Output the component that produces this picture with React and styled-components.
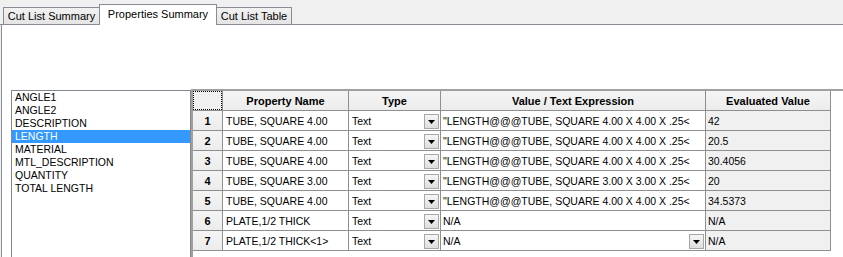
import React from 'react';
import styled, { createGlobalStyle } from 'styled-components';

const Global = createGlobalStyle`
  html, body { margin: 0; padding: 0; background: #ffffff; }
  body { font-family: "Liberation Sans", Arial, sans-serif; font-size: 10px; color: #000; }
  #root { width: 843px; height: 257px; overflow: hidden; }
`;

const Window = styled.div`
  width: 843px;
  height: 257px;
  display: flex;
  flex-direction: column;
  overflow: hidden;
  background: #f0f0f0;
`;

const TabStrip = styled.div`
  height: 25px;
  box-sizing: border-box;
  border-bottom: 1px solid #898c95;
  display: flex;
  align-items: flex-end;
  padding-left: 3px;
  flex-shrink: 0;
`;

const Tab = styled.div`
  box-sizing: border-box;
  width: ${p => p.$w}px;
  height: ${p => (p.$active ? 21 : 17)}px;
  margin-bottom: ${p => (p.$active ? -1 : 0)}px;
  padding-top: ${p => (p.$active ? 2 : 1)}px;
  border: 1px solid #898c95;
  border-bottom: ${p => (p.$active ? 'none' : '0')};
  background: ${p => (p.$active ? '#ffffff' : 'linear-gradient(#f2f2f2, #e4e4e4)')};
  font-size: 11px;
  line-height: 15px;
  text-align: center;
  white-space: nowrap;
  position: relative;
  z-index: ${p => (p.$active ? 2 : 1)};
  margin-left: ${p => p.$ml || 0}px;
`;

const Panel = styled.div`
  flex: 1;
  min-height: 0;
  display: flex;
  align-items: flex-start;
  margin-left: 1px;
  border-left: 1px solid #898c95;
  background: #ffffff;
  padding: 64px 0 0 9px;
`;

const ListBox = styled.div`
  box-sizing: border-box;
  width: 180px;
  height: 200px;
  margin-top: 1px;
  border: 1px solid #828790;
  background: #ffffff;
  flex-shrink: 0;
`;

const ListItem = styled.div`
  height: 13px;
  line-height: 13px;
  padding-left: 3px;
  font-size: 10.5px;
  white-space: nowrap;
  background: ${p => (p.$selected ? '#3399ff' : 'transparent')};
  color: ${p => (p.$selected ? '#ffffff' : '#000000')};
`;

const GridArea = styled.div`
  flex: 1;
  height: 200px;
  border-top: 2px solid #a0a0a0;
  border-left: 2px solid #a0a0a0;
  background: #ffffff;
`;

const Table = styled.div`
  display: grid;
  grid-template-columns: 30px 126px 92px 265px 125px;
  grid-auto-rows: 20px;
  width: 638px;
`;

const Cell = styled.div`
  box-sizing: border-box;
  border-right: 1px solid #8f8f8f;
  border-bottom: 1px solid #8f8f8f;
  display: flex;
  align-items: center;
  padding-left: ${p => p.$pl || 3}px;
  font-size: 10.5px;
  white-space: nowrap;
  overflow: hidden;
  background: ${p => (p.$shade ? '#f0f0f0' : '#ffffff')};
`;

const HeadCell = styled.div`
  box-sizing: border-box;
  border-right: 1px solid #8f8f8f;
  border-bottom: 1px solid #8f8f8f;
  display: flex;
  align-items: center;
  justify-content: center;
  font-size: 11px;
  font-weight: bold;
  white-space: nowrap;
  background: linear-gradient(#f4f4f4, #ececec);
`;

const Corner = styled.div`
  box-sizing: border-box;
  border-right: 1px solid #8f8f8f;
  border-bottom: 1px solid #8f8f8f;
  background: #f0f0f0;
  position: relative;
  &::after {
    content: '';
    position: absolute;
    inset: 0;
    border: 1px dotted #000;
  }
`;

const CellText = styled.span`
  flex: 1;
  overflow: hidden;
`;

const DropButton = styled.div`
  box-sizing: border-box;
  width: 15px;
  height: 15px;
  margin-right: 1px;
  margin-top: 1px;
  border: 1px solid #a6a6a6;
  background: linear-gradient(#f6f6f6, #dedede);
  display: flex;
  align-items: center;
  justify-content: center;
  flex-shrink: 0;
`;

const Arrow = () => (
  <svg width="7" height="4" viewBox="0 0 7 4" style={{ marginTop: 2 }}>
    <path d="M0 0 H7 L3.5 4 Z" fill="#000" />
  </svg>
);

const listItems = [
  'ANGLE1', 'ANGLE2', 'DESCRIPTION', 'LENGTH', 'MATERIAL',
  'MTL_DESCRIPTION', 'QUANTITY', 'TOTAL LENGTH',
];

const rows = [
  { name: 'TUBE, SQUARE 4.00', value: '"LENGTH@@@TUBE, SQUARE 4.00 X 4.00 X .25<', ev: '42' },
  { name: 'TUBE, SQUARE 4.00', value: '"LENGTH@@@TUBE, SQUARE 4.00 X 4.00 X .25<', ev: '20.5' },
  { name: 'TUBE, SQUARE 4.00', value: '"LENGTH@@@TUBE, SQUARE 4.00 X 4.00 X .25<', ev: '30.4056' },
  { name: 'TUBE, SQUARE 3.00', value: '"LENGTH@@@TUBE, SQUARE 3.00 X 3.00 X .25<', ev: '20' },
  { name: 'TUBE, SQUARE 4.00', value: '"LENGTH@@@TUBE, SQUARE 4.00 X 4.00 X .25<', ev: '34.5373' },
  { name: 'PLATE,1/2 THICK', value: 'N/A', ev: 'N/A' },
  { name: 'PLATE,1/2 THICK<1>', value: 'N/A', ev: 'N/A', valueDrop: true },
];

export default function App() {
  return (
    <>
      <Global />
      <Window>
        <TabStrip>
          <Tab $w={97}>Cut List Summary</Tab>
          <Tab $w={118} $active $ml={-1}>Properties Summary</Tab>
          <Tab $w={76} $ml={-1}>Cut List Table</Tab>
        </TabStrip>
        <Panel>
          <ListBox>
            {listItems.map(it => (
              <ListItem key={it} $selected={it === 'LENGTH'}>{it}</ListItem>
            ))}
          </ListBox>
          <GridArea>
            <Table>
              <Corner />
              <HeadCell>Property Name</HeadCell>
              <HeadCell>Type</HeadCell>
              <HeadCell>Value / Text Expression</HeadCell>
              <HeadCell>Evaluated Value</HeadCell>
              {rows.map((r, i) => (
                <React.Fragment key={i}>
                  <HeadCell>{i + 1}</HeadCell>
                  <Cell>{r.name}</Cell>
                  <Cell>
                    <CellText>Text</CellText>
                    <DropButton><Arrow /></DropButton>
                  </Cell>
                  <Cell $pl={2}>
                    <CellText>{r.value}</CellText>
                    {r.valueDrop && <DropButton><Arrow /></DropButton>}
                  </Cell>
                  <Cell $shade $pl={2}>{r.ev}</Cell>
                </React.Fragment>
              ))}
            </Table>
          </GridArea>
        </Panel>
      </Window>
    </>
  );
}
